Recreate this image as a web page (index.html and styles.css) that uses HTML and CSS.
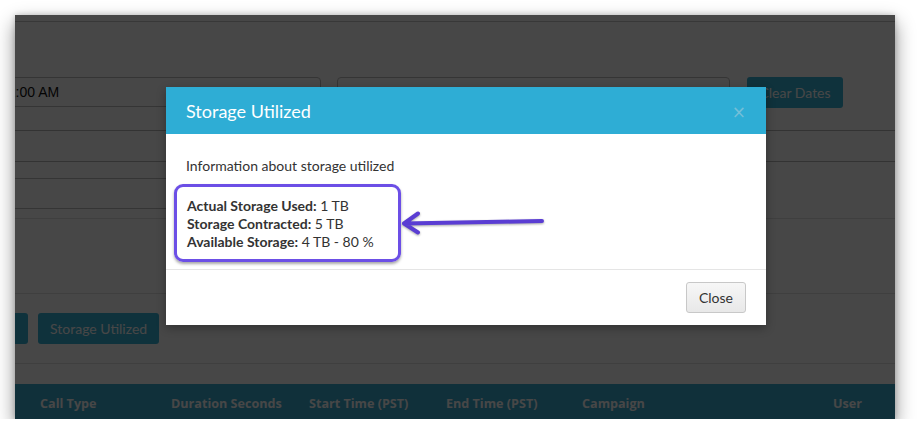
FILE: index.html
```html
<!DOCTYPE html>
<html lang="en">

<head>
    <meta charset="UTF-8">
    <title>Call Recordings - Storage Utilized</title>
    <link rel="stylesheet" href="styles.css">
</head>

<body>
    <div class="window">
        <div class="page">
            <div class="topbar"></div>

            <div class="filter-row">
                <div class="field field-start">12:00 AM</div>
                <div class="field field-end"></div>
                <button class="btn-blue btn-clear">Clear Dates</button>
            </div>

            <div class="search-strip"></div>
            <div class="field field-small"></div>
            <div class="results-area"></div>

            <div class="actions">
                <button class="btn-blue btn-cut"></button>
                <button class="btn-blue">Storage Utilized</button>
            </div>

            <div class="table-head">
                <span class="col col-type">Call Type</span>
                <span class="col col-dur">Duration Seconds</span>
                <span class="col col-start">Start Time (PST)</span>
                <span class="col col-end">End Time (PST)</span>
                <span class="col col-camp">Campaign</span>
                <span class="col col-user">User</span>
            </div>
        </div>

        <div class="backdrop"></div>

        <div class="modal">
            <div class="modal-header">
                <h4>Storage Utilized</h4>
                <span class="close-x">&times;</span>
            </div>
            <div class="modal-body">
                <p>Information about storage utilized</p>
                <div class="highlight">
                    <div><b>Actual Storage Used:</b> 1 TB</div>
                    <div><b>Storage Contracted:</b> 5 TB</div>
                    <div><b>Available Storage:</b> 4 TB - 80 %</div>
                </div>
            </div>
            <div class="modal-footer">
                <button class="btn-default">Close</button>
            </div>

            <svg class="arrow" width="160" height="36" viewBox="0 0 160 36">
                <path d="M146 16 L8 18.5 M22 8.5 L8 18.5 L22 27.5" fill="none" stroke="#5a3dd3" stroke-width="4" stroke-linecap="round" stroke-linejoin="round"/>
            </svg>
        </div>
    </div>
</body>

</html>
```

FILE: styles.css
```css
/* screenshot window with the dimmed page and the modal */
body {
    margin: 0;
    background: #fff;
    font-family: Lato, "Open Sans", sans-serif;
}

.window {
    position: relative;
    margin: 15px 0 0 15px;
    width: 880px;
    height: 404px;
    overflow: hidden;
    background: #fff;
    box-shadow: 0 8px 18px rgba(0, 0, 0, 0.45), 0 0 6px rgba(0, 0, 0, 0.2);
}

.topbar {
    height: 6px;
    border-bottom: 1px solid #c8c8c8;
}

.filter-row {
    display: flex;
    gap: 16px;
    margin: 55px 0 0 -28px;
}

.field {
    box-sizing: border-box;
    height: 30px;
    padding: 0 12px;
    border: 1px solid #bdbdbd;
    border-radius: 4px;
    font-family: "Liberation Sans", Arial, sans-serif;
    font-size: 14px;
    line-height: 28px;
    color: #111;
    background: #fff;
}

.field-start {
    width: 334px;
}

.field-end {
    width: 393px;
}

.btn-blue {
    height: 31px;
    padding: 0 12px;
    border: 0;
    border-radius: 3px;
    background: #38b2d6;
    color: #fff;
    font-family: Lato, sans-serif;
    font-size: 14px;
}

.btn-clear {
    width: 96px;
    margin-left: 1px;
}

.search-strip {
    height: 30px;
    margin: 22px -40px 0 -40px;
    border-top: 1px solid #b8b8b8;
    border-bottom: 1px solid #b8b8b8;
}

.field-small {
    width: 300px;
    height: 31px;
    margin: 16px 0 0 -40px;
}

.results-area {
    height: 74px;
    margin-top: 9px;
    border-top: 1px solid #e2e2e2;
    border-bottom: 1px solid #e2e2e2;
}

.actions {
    display: flex;
    gap: 10px;
    height: 50px;
    padding-top: 19px;
    margin-left: -50px;
    border-bottom: 1px solid #e2e2e2;
}

.btn-cut {
    width: 63px;
}

.table-head {
    display: flex;
    height: 40px;
    margin-top: 20px;
    padding-top: 11px;
    box-sizing: border-box;
    background: #3aabd0;
    color: #fff;
    font-family: "Open Sans", sans-serif;
    font-size: 12.6px;
    font-weight: bold;
}

.col {
    display: block;
}

.col-type { width: 131px; padding-left: 25px; }
.col-dur { width: 138px; }
.col-start { width: 137px; }
.col-end { width: 136px; }
.col-camp { width: 251px; }

.backdrop {
    position: absolute;
    inset: 0;
    background: rgba(0, 0, 0, 0.72);
}

.modal {
    position: absolute;
    left: 151px;
    top: 72px;
    width: 600px;
    background: #fff;
    box-shadow: 0 3px 9px rgba(0, 0, 0, 0.3);
    color: #333;
}

.modal-header {
    display: flex;
    align-items: center;
    justify-content: space-between;
    height: 47px;
    padding: 0 20px;
    background: #2eadd5;
}

.modal-header h4 {
    margin: 0;
    font-size: 18px;
    font-weight: normal;
    color: #fff;
}

.close-x {
    margin: 2px 0 0 0;
    font-family: "DejaVu Sans", sans-serif;
    font-size: 17px;
    color: #74bfd8;
}

.modal-body {
    padding: 22px 20px 7px;
    font-size: 14px;
}

.modal-body p {
    margin: 0;
    line-height: 20px;
}

.highlight {
    display: inline-block;
    margin: 8px 0 0 -12px;
    padding: 10px 24px 8px 10px;
    border: 3px solid #6c4fe6;
    border-radius: 9px;
    line-height: 18px;
    box-shadow: 0 2px 3px rgba(0, 0, 0, 0.35);
}

.modal-footer {
    display: flex;
    justify-content: flex-end;
    padding: 12px 20px;
    border-top: 1px solid #e5e5e5;
}

.btn-default {
    height: 31px;
    padding: 0 12px;
    border: 1px solid #c8c8c8;
    border-radius: 3px;
    background: linear-gradient(#f7f7f7, #e8e8e8);
    color: #333;
    font-family: Lato, sans-serif;
    font-size: 14px;
}

.arrow {
    position: absolute;
    left: 230px;
    top: 118px;
    filter: drop-shadow(0 1px 1px rgba(0, 0, 0, 0.35));
}
```
